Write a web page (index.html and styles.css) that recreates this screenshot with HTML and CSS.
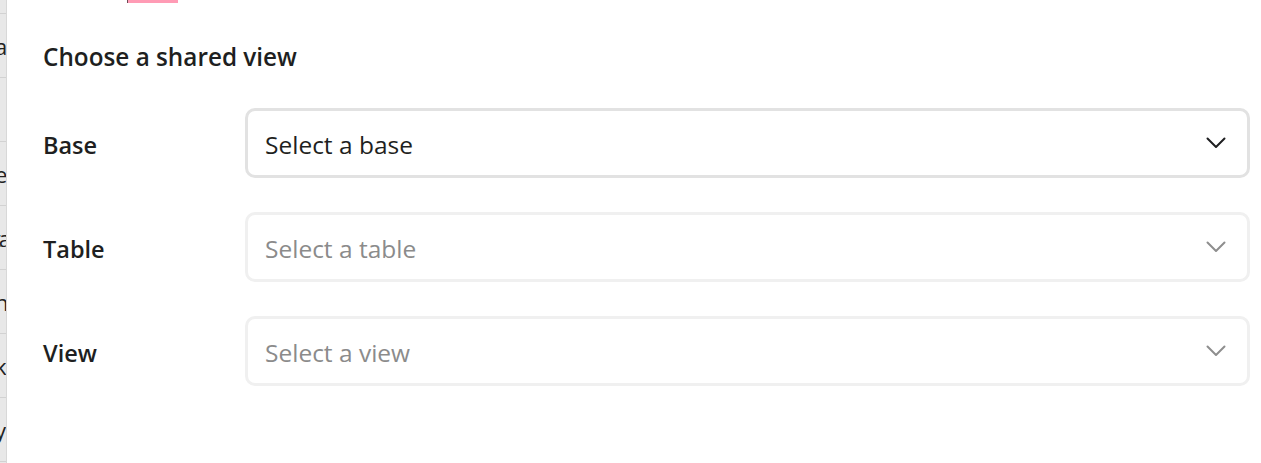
FILE: index.html
```html
<!DOCTYPE html>
<html lang="en">
<head>
<meta charset="utf-8">
<title>Choose a shared view</title>
<link rel="stylesheet" href="styles.css">
</head>
<body>
<div class="page">
  <div class="backdrop" aria-hidden="true">
    <div class="bd-row bd-first"></div>
    <div class="bd-row"><span class="bd-text">a</span></div>
    <div class="bd-row"></div>
    <div class="bd-row"><span class="bd-text">e</span></div>
    <div class="bd-row"><span class="bd-text bd-ta">ta</span></div>
    <div class="bd-row"><span class="bd-text">n</span></div>
    <div class="bd-row"><span class="bd-text">k</span></div>
    <div class="bd-row"><span class="bd-text">y</span></div>
  </div>
  <div class="panel">
    <div class="tab-strip"><div class="tab-indicator"></div></div>
    <div class="content">
      <h2 class="title">Choose a shared view</h2>
      <div class="field">
        <div class="label">Base</div>
        <div class="select select-active">
          <span class="value">Select a base</span>
          <svg class="chev" width="20" height="12" viewBox="0 0 20 12"><path d="M1.5 1.5 L10 10 L18.5 1.5" fill="none" stroke="currentColor" stroke-width="2" stroke-linecap="round" stroke-linejoin="round"/></svg>
        </div>
      </div>
      <div class="field">
        <div class="label">Table</div>
        <div class="select select-disabled">
          <span class="value">Select a table</span>
          <svg class="chev" width="20" height="12" viewBox="0 0 20 12"><path d="M1.5 1.5 L10 10 L18.5 1.5" fill="none" stroke="currentColor" stroke-width="2" stroke-linecap="round" stroke-linejoin="round"/></svg>
        </div>
      </div>
      <div class="field">
        <div class="label">View</div>
        <div class="select select-disabled">
          <span class="value">Select a view</span>
          <svg class="chev" width="20" height="12" viewBox="0 0 20 12"><path d="M1.5 1.5 L10 10 L18.5 1.5" fill="none" stroke="currentColor" stroke-width="2" stroke-linecap="round" stroke-linejoin="round"/></svg>
        </div>
      </div>
    </div>
  </div>
</div>
</body>
</html>
```
FILE: styles.css
```css
* { box-sizing: border-box; }
html, body {
  margin: 0;
  padding: 0;
  background: #ffffff;
}
body {
  font-family: "Open Sans", "Noto Sans", sans-serif;
  color: #1e1f21;
  width: 1261px;
  height: 463px;
  overflow: hidden;
}
.page {
  display: flex;
  height: 463px;
}
.backdrop {
  width: 7px;
  flex: none;
  background: #e8e8e8;
  border-right: 1px solid #d8d8d8;
  overflow: hidden;
  display: flex;
  flex-direction: column;
}
.bd-row {
  height: 64px;
  flex: none;
  border-bottom: 1px solid #d2d2d2;
  display: flex;
  align-items: center;
  overflow: hidden;
}
.bd-first { height: 14px; }
.bd-text {
  font-size: 22px;
  color: #222;
  margin-left: -5px;
  line-height: 1;
}
.bd-ta { margin-left: -7px; letter-spacing: -2px; }
.panel {
  flex: 1;
  display: flex;
  flex-direction: column;
}
.tab-strip {
  height: 3px;
  display: flex;
}
.tab-indicator {
  margin-left: 120px;
  width: 51px;
  height: 3px;
  background: #ff9bb5;
  border-left: 1px solid #6b4a55;
}
.content {
  padding: 38px 11px 0 36px;
  display: flex;
  flex-direction: column;
  gap: 34px;
}
.title {
  margin: 0 0 1px 0;
  font-size: 24.3px;
  font-weight: 600;
  line-height: 32px;
  color: #1e1f21;
}
.field {
  display: flex;
  align-items: center;
}
.label {
  width: 202px;
  flex: none;
  font-size: 23.5px;
  font-weight: 600;
  color: #1e1f21;
  padding-top: 4px;
}
.select {
  flex: 1;
  height: 70px;
  border: 3px solid #e4e4e4;
  border-radius: 10px;
  display: flex;
  align-items: center;
  justify-content: space-between;
  padding: 0 21px 0 17px;
  font-size: 24.5px;
  background: #fff;
}
.value { padding-top: 2px; }
.select-active { color: #1e1f21; border-color: #e2e2e2; }
.select-disabled { color: #8b8b8b; border-color: #f0f0f0; }
.chev { display: block; }
.select-active .chev { color: #1e1f21; }
.select-disabled .chev { color: #8e8e8e; }
```
